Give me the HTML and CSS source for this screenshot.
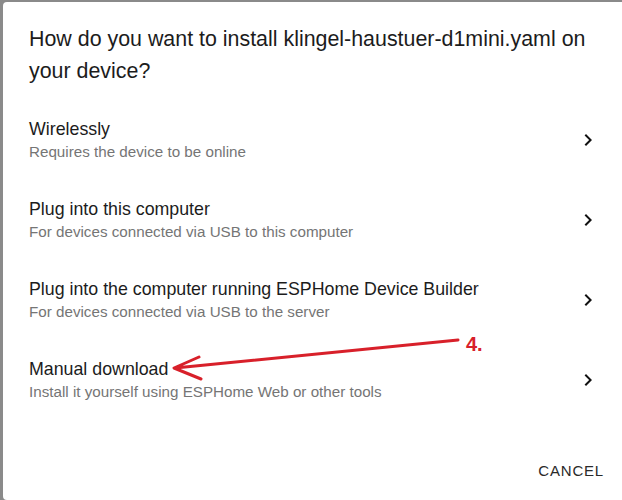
FILE: index.html
```html
<!DOCTYPE html>
<html>
<head>
<meta charset="utf-8">
<link rel="stylesheet" href="styles.css">
</head>
<body>
<div class="backdrop">
  <div class="dialog">
    <h2 class="title">How do you want to install klingel-haustuer-d1mini.yaml on your device?</h2>
    <ul class="list">
      <li class="item">
        <div class="texts">
          <span class="primary">Wirelessly</span>
          <span class="secondary">Requires the device to be online</span>
        </div>
        <svg class="chev" viewBox="0 0 24 24" width="24" height="24"><path d="M8.59 16.59L13.17 12 8.59 7.41 10 6l6 6-6 6-1.41-1.41z"/></svg>
      </li>
      <li class="item">
        <div class="texts">
          <span class="primary">Plug into this computer</span>
          <span class="secondary">For devices connected via USB to this computer</span>
        </div>
        <svg class="chev" viewBox="0 0 24 24" width="24" height="24"><path d="M8.59 16.59L13.17 12 8.59 7.41 10 6l6 6-6 6-1.41-1.41z"/></svg>
      </li>
      <li class="item">
        <div class="texts">
          <span class="primary">Plug into the computer running ESPHome Device Builder</span>
          <span class="secondary">For devices connected via USB to the server</span>
        </div>
        <svg class="chev" viewBox="0 0 24 24" width="24" height="24"><path d="M8.59 16.59L13.17 12 8.59 7.41 10 6l6 6-6 6-1.41-1.41z"/></svg>
      </li>
      <li class="item">
        <div class="texts">
          <span class="primary">Manual download</span>
          <span class="secondary">Install it yourself using ESPHome Web or other tools</span>
        </div>
        <svg class="chev" viewBox="0 0 24 24" width="24" height="24"><path d="M8.59 16.59L13.17 12 8.59 7.41 10 6l6 6-6 6-1.41-1.41z"/></svg>
      </li>
    </ul>
    <div class="actions">
      <button class="btn">Cancel</button>
    </div>
  </div>
  <svg class="annot" width="622" height="500" viewBox="0 0 622 500">
    <path d="M458 340 L175 368 M199 357 L174 368 L201 379" fill="none" stroke="#d8202a" stroke-width="3" stroke-linecap="round" stroke-linejoin="round"/>
  </svg>
  <span class="step">4.</span>
</div>
</body>
</html>
```
FILE: styles.css
```css
* { box-sizing: border-box; }
html, body { margin: 0; padding: 0; }
body {
  width: 622px;
  height: 500px;
  overflow: hidden;
  font-family: "Liberation Sans", Arial, sans-serif;
  background: #8a8a8a;
}
.backdrop {
  position: relative;
  width: 622px;
  height: 500px;
  padding: 2px 0 0 3px;
}
.dialog {
  background: #fff;
  border-radius: 4px 0 0 4px;
  height: 498px;
  display: flex;
  flex-direction: column;
}
.title {
  margin: 0;
  padding: 21px 24px 13px 26px;
  font-size: 21.4px;
  font-weight: 400;
  line-height: 32px;
  color: #1c1c1c;
}
.list {
  list-style: none;
  margin: 0;
  padding: 0;
}
.item {
  height: 80px;
  display: flex;
  align-items: center;
  padding: 0 22px 0 26px;
}
.texts {
  flex: 1;
  display: flex;
  flex-direction: column;
}
.primary {
  font-size: 17.8px;
  line-height: 22px;
  color: #1c1c1c;
}
.secondary {
  font-size: 15.2px;
  line-height: 20px;
  margin-top: 2px;
  color: #757575;
}
.chev { fill: #111; flex: none; }
.actions {
  margin-top: auto;
  display: flex;
  justify-content: flex-end;
  padding: 0 10px 12px 0;
}
.btn {
  font-family: "Liberation Sans", Arial, sans-serif;
  background: none;
  border: 0;
  height: 36px;
  padding: 0 8px;
  font-size: 15px;
  font-weight: 400;
  letter-spacing: 0.8px;
  text-transform: uppercase;
  color: #2a2a2a;
}
.annot {
  position: absolute;
  left: 0;
  top: 0;
  pointer-events: none;
}
.step {
  position: absolute;
  left: 466px;
  top: 333px;
  font-size: 20px;
  font-weight: 700;
  color: #d8202a;
  font-family: "Liberation Sans", Arial, sans-serif;
}
```
